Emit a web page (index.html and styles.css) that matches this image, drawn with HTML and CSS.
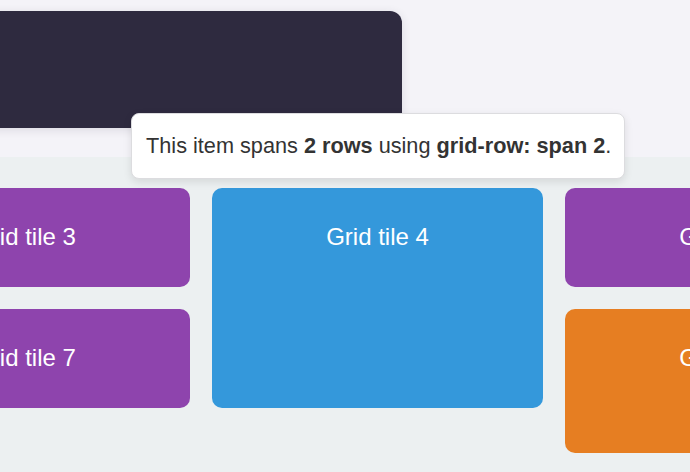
FILE: index.html
```html
<!DOCTYPE html>
<html>
<head>
<meta charset="utf-8">
<link rel="stylesheet" href="styles.css">
</head>
<body>
<div class="page">
  <section class="top">
    <div class="hero"></div>
  </section>
  <section class="grid-section">
    <div class="grid">
      <div class="tile purple">Grid tile 3</div>
      <div class="tile blue tall">Grid tile 4</div>
      <div class="tile purple">Grid tile 5</div>
      <div class="tile purple">Grid tile 7</div>
      <div class="tile orange big">Grid tile 8</div>
    </div>
  </section>
  <div class="tooltip">This item spans <b>2 rows</b> using <b>grid-row: span 2</b>.</div>
</div>
</body>
</html>
```

FILE: styles.css
```css
html, body {
  margin: 0;
  padding: 0;
}
body {
  width: 690px;
  height: 472px;
  overflow: hidden;
  font-family: "Liberation Sans", Arial, sans-serif;
  background: #ecf0f1;
}
.page {
  position: relative;
  height: 472px;
  overflow: hidden;
}
.top {
  background: #f4f3f8;
  height: 157px;
  padding-top: 11px;
  box-sizing: border-box;
}
.hero {
  width: 432px;
  height: 117px;
  margin-left: -30px;
  background: #2e2a3f;
  border-radius: 12px;
  box-shadow: 0 2px 10px rgba(46, 42, 63, 0.12);
}
.grid-section {
  background: #ecf0f1;
  padding-top: 31px;
  height: 315px;
}
.grid {
  display: grid;
  grid-template-columns: repeat(3, 331px);
  column-gap: 22px;
  row-gap: 22px;
  margin-left: -141px;
  width: 1037px;
  align-items: start;
}
.tile {
  box-sizing: border-box;
  height: 99px;
  padding: 35px 10px 37px;
  border-radius: 10px;
  color: #ffffff;
  font-size: 24px;
  line-height: 27px;
  text-align: center;
}
.purple { background: #8e44ad; }
.blue { background: #3498db; }
.orange { background: #e67e22; }
.tall {
  grid-row: span 2;
  height: 220px;
}
.big {
  height: 144px;
}
.tooltip {
  position: absolute;
  left: 131px;
  top: 113px;
  width: 494px;
  box-sizing: border-box;
  padding: 18px 14px 19px;
  background: #ffffff;
  border: 1px solid #dcdcdf;
  border-radius: 8px;
  box-shadow: 0 3px 8px rgba(0, 0, 0, 0.10);
  color: #333333;
  font-size: 21.7px;
  line-height: 27px;
  white-space: nowrap;
}
.tooltip b {
  font-weight: bold;
}
```
